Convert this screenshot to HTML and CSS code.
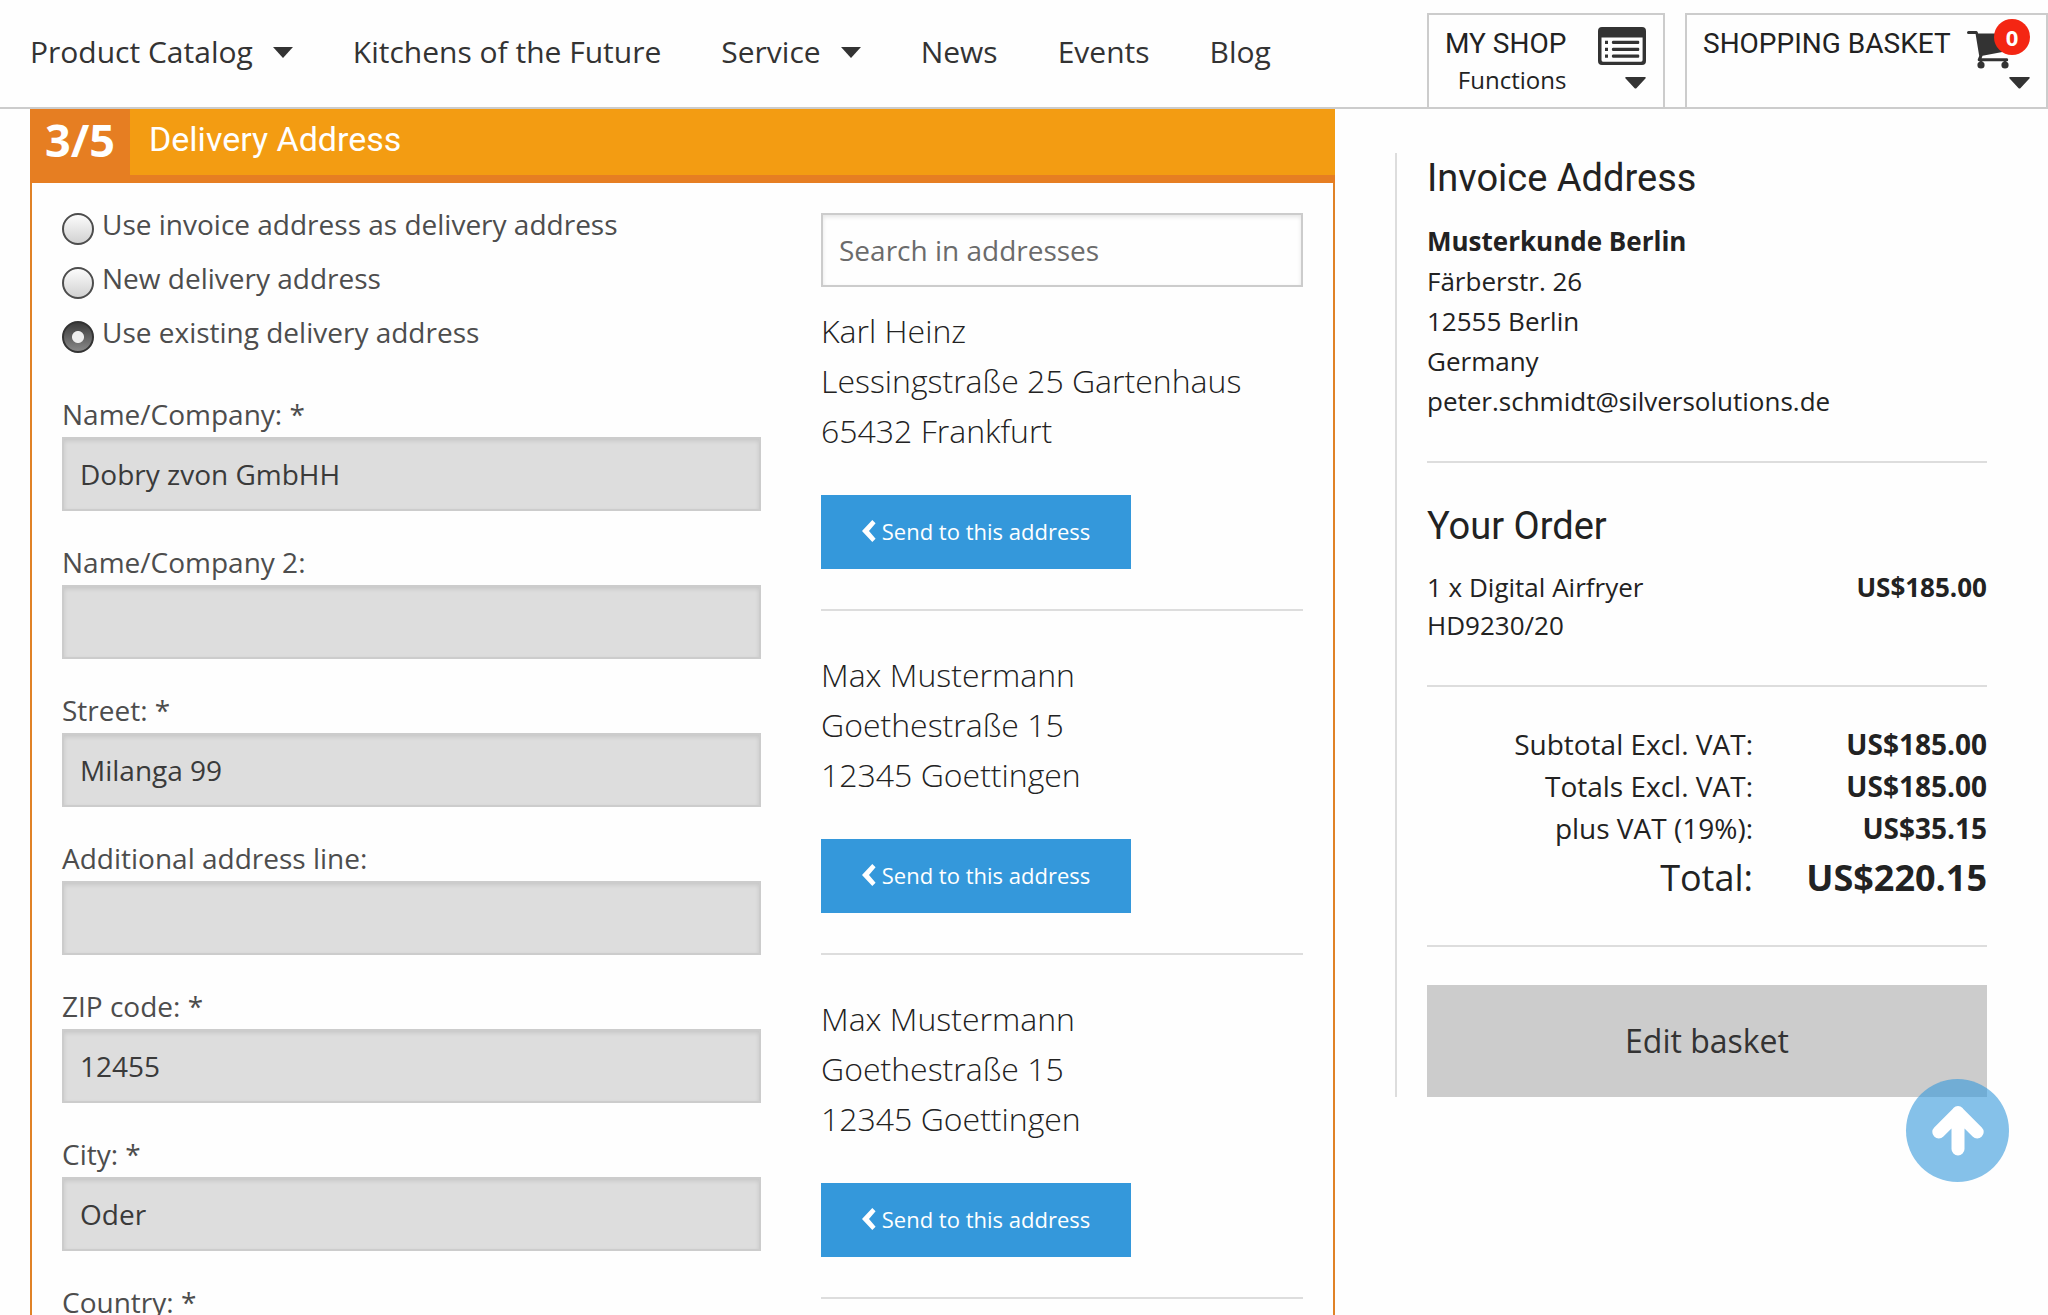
FILE: index.html
```html
<!DOCTYPE html>
<html lang="en">
<head>
<meta charset="utf-8">
<title>Checkout – Delivery Address</title>
<link rel="stylesheet" href="styles.css">
</head>
<body>
<svg class="defs" aria-hidden="true">
  <symbol id="chevron" viewBox="0 0 14 22"><path d="M10.300 0 L13.600 3.300 L7 11 L13.600 18.700 L10.300 22 L0 11 Z"/></symbol>
  <symbol id="caret" viewBox="0 0 21 12"><path d="M1 0 H20 Q21.3 0.3 20.4 1.6 L11.6 11 Q10.5 12.2 9.4 11 L0.6 1.6 Q-0.3 0.3 1 0 Z"/></symbol>
</svg>
<header class="topbar">
  <nav class="nav">
    <a class="nav-item">Product Catalog<i class="arrow"></i></a>
    <a class="nav-item">Kitchens of the Future</a>
    <a class="nav-item">Service<i class="arrow"></i></a>
    <a class="nav-item">News</a>
    <a class="nav-item">Events</a>
    <a class="nav-item">Blog</a>
  </nav>
  <div class="tabs">
    <div class="tab tab-shop">
      <div class="tab-text"><span class="tab-title">MY SHOP</span><span class="tab-sub">Functions</span></div>
      <div class="tab-icons">
        <svg class="icon-list" viewBox="0 0 48 38">
          <path fill-rule="evenodd" d="M4 0 H44 Q48 0 48 4 V34 Q48 38 44 38 H4 Q0 38 0 34 V4 Q0 0 4 0 Z M3.5 10.5 V33 Q3.5 34.7 5 34.7 H43 Q44.6 34.7 44.6 33 V10.5 Z"/>
          <path d="M7 13.7h3v3.2H7z M7 20.7h3v3.2H7z M7 27.5h3v3.2H7z"/>
          <path d="M15 13.7h25.500q.8 0 .8 1.600t-.8 1.600H15q-1.200 0-1.200-1.600t1.200-1.600z M15 20.700h25.500q.8 0 .8 1.600t-.8 1.600H15q-1.200 0-1.200-1.600t1.200-1.600z M15 27.500h25.500q.8 0 .8 1.600t-.8 1.600H15q-1.200 0-1.200-1.600t1.200-1.600z"/>
        </svg>
        <svg class="icon-caret"><use href="#caret"/></svg>
      </div>
    </div>
    <div class="tab tab-basket">
      <div class="tab-text"><span class="tab-title">SHOPPING BASKET</span></div>
      <div class="tab-icons tab-icons-cart">
        <svg class="icon-cart" viewBox="0 0 63 38">
          <path d="M1.500 0 H9.500 Q10.800 0 11.200 2.600 H51 L46 19 L15.500 24.700 L14.600 27.300 H40 Q41.200 27.300 41.200 28.800 T40 30.300 H12 Q10.500 30.300 10.700 28.500 L12.200 25 L8.600 3 H1.500 Q0 3 0 1.500 T1.500 0 Z"/>
          <circle cx="14" cy="34" r="3.600"/><circle cx="38" cy="34" r="3.600"/>
          <path d="M12.700 29h2.600v4h-2.600z M36.700 29h2.600v4h-2.600z"/>
        </svg>
        <svg class="icon-caret"><use href="#caret"/></svg>
        <span class="badge">0</span>
      </div>
    </div>
  </div>
</header>

<main class="page">
  <section class="panel">
    <div class="panel-head"><span class="step">3/5</span><h2 class="panel-title">Delivery Address</h2></div>
    <div class="panel-body">
      <form class="form">
        <label class="radio"><i class="dot"></i>Use invoice address as delivery address</label>
        <label class="radio"><i class="dot"></i>New delivery address</label>
        <label class="radio"><i class="dot dot-on"></i>Use existing delivery address</label>
        <div class="fields">
          <label class="field">Name/Company: *<input class="input" value="Dobry zvon GmbHH"></label>
          <label class="field">Name/Company 2:<input class="input"></label>
          <label class="field">Street: *<input class="input" value="Milanga 99"></label>
          <label class="field">Additional address line:<input class="input"></label>
          <label class="field">ZIP code: *<input class="input" value="12455"></label>
          <label class="field">City: *<input class="input" value="Oder"></label>
          <label class="field">Country: *</label>
        </div>
      </form>
      <div class="addresses">
        <input class="input search" placeholder="Search in addresses">
        <article class="address">
          <p class="lines">Karl Heinz<br>Lessingstraße 25 Gartenhaus<br>65432 Frankfurt</p>
          <a class="send"><svg class="chev"><use href="#chevron"/></svg>Send to this address</a>
        </article>
        <article class="address">
          <p class="lines">Max Mustermann<br>Goethestraße 15<br>12345 Goettingen</p>
          <a class="send"><svg class="chev"><use href="#chevron"/></svg>Send to this address</a>
        </article>
        <article class="address">
          <p class="lines">Max Mustermann<br>Goethestraße 15<br>12345 Goettingen</p>
          <a class="send"><svg class="chev"><use href="#chevron"/></svg>Send to this address</a>
        </article>
      </div>
    </div>
  </section>

  <aside class="summary">
    <section class="invoice">
      <h3 class="heading">Invoice Address</h3>
      <p class="invoice-lines"><b>Musterkunde Berlin</b><br>Färberstr. 26<br>12555 Berlin<br>Germany<br>peter.schmidt@silversolutions.de</p>
    </section>
    <section class="order">
      <h3 class="heading">Your Order</h3>
      <div class="order-row"><span>1 x Digital Airfryer<br>HD9230/20</span><b>US$185.00</b></div>
    </section>
    <section class="totals">
      <div class="total-row"><span>Subtotal Excl. VAT:</span><b>US$185.00</b></div>
      <div class="total-row"><span>Totals Excl. VAT:</span><b>US$185.00</b></div>
      <div class="total-row"><span>plus VAT (19%):</span><b>US$35.15</b></div>
      <div class="total-row total-final"><span>Total:</span><b>US$220.15</b></div>
    </section>
    <a class="edit">Edit basket</a>
  </aside>
</main>

<a class="to-top">
  <svg class="to-top-icon" viewBox="0 0 52 50"><path d="M26 6.500 V43 M6.800 26 L26 6.800 L45.200 26"/></svg>
</a>
</body>
</html>
```
FILE: styles.css
```css
* { box-sizing: border-box; }

html, body {
  margin: 0;
  width: 2048px;
  height: 1315px;
  overflow: hidden;
}

body {
  position: relative;
  background: #fefefe;
  color: #222;
  font-family: "Open Sans", "Noto Sans", sans-serif;
}

h2, h3, p { margin: 0; font-weight: 400; }

.defs { display: none; }

/* Top bar */
.topbar {
  display: flex;
  justify-content: space-between;
  height: 109px;
  padding-left: 30px;
  border-bottom: 2px solid #ccc;
}

.nav { display: flex; gap: 60px; }

.nav-item {
  display: flex;
  align-items: center;
  height: 102px;
  font-size: 30px;
  color: #333;
  white-space: nowrap;
}

.arrow {
  margin-top: 2px;
  margin-left: 20px;
  border: 10px solid transparent;
  border-top: 11px solid #333;
  border-bottom: 0;
}

.tabs { display: flex; gap: 20px; padding-top: 13px; }

.tab {
  display: flex;
  justify-content: space-between;
  border: 2px solid #ccc;
  border-bottom: 0;
  padding: 0 17px 0 16px;
}

.tab-shop { width: 238px; }
.tab-basket { width: 363px; padding-right: 16px; }

.tab-text {
  display: flex;
  flex-direction: column;
  align-items: flex-end;
  white-space: nowrap;
}

.tab-title {
  margin-top: 13px;
  font: 28px/32px Roboto, sans-serif;
}

.tab-sub { margin-top: 3px; font-size: 24px; line-height: 33px; }

.tab-icons {
  display: flex;
  flex-direction: column;
  align-items: flex-end;
  gap: 12px;
  padding-top: 12px;
  fill: #333;
}

.tab-icons-cart { position: relative; padding-top: 16px; gap: 8px; }
.icon-list { width: 48px; height: 38px; }
.icon-cart { width: 63px; height: 38px; }
.icon-caret { width: 21px; height: 12px; }

.badge {
  position: absolute;
  top: 4px;
  right: 0;
  width: 36px;
  height: 36px;
  border-radius: 50%;
  background: #f42613;
  color: #fff;
  font-size: 22px;
  font-weight: 700;
  line-height: 36px;
  text-align: center;
}

/* Page */
.page {
  display: flex;
  align-items: flex-start;
  gap: 60px;
  padding-left: 30px;
}

.panel {
  width: 1305px;
  height: 1206px;
  border: 2px solid #e08227;
  border-top: 0;
  border-bottom: 0;
}

.panel-head {
  display: flex;
  height: 74px;
  margin: 0 -2px;
  background: #f39c12;
  border-bottom: 8px solid #e67e22;
  color: #fff;
}

.step {
  width: 100px;
  background: #e67e22;
  font-size: 45px;
  font-weight: 700;
  line-height: 62px;
  text-align: center;
}

.panel-title {
  padding-left: 19px;
  font: 34px/61px Roboto, sans-serif;
}

.panel-body {
  display: grid;
  grid-template-columns: 699px 482px;
  column-gap: 60px;
  height: 1132px;
  padding: 30px 30px 0;
  overflow: hidden;
}

.radio {
  display: flex;
  gap: 8px;
  height: 54px;
  font-size: 28px;
  line-height: 22px;
  color: #4d4d4d;
}

.dot {
  width: 32px;
  height: 32px;
  border: 2px solid #4d4d4d;
  border-radius: 50%;
  background: linear-gradient(#fcfcfc, #d2d2d2);
}

.dot-on {
  border-color: #333;
  background:
    radial-gradient(circle at 50% 50%, #eee 5.500px, transparent 6.500px),
    linear-gradient(#3c3c3c, #888);
}

.fields { padding-top: 18px; }

.field {
  display: block;
  height: 148px;
  font-size: 28px;
  line-height: 42px;
  color: #4d4d4d;
}

.input {
  display: block;
  width: 100%;
  height: 74px;
  padding: 0 16px 1px;
  border: 2px solid #ccc;
  border-radius: 0;
  background: #ddd;
  box-shadow: inset 0 2px 4px rgba(0, 0, 0, .1);
  color: #3a3a3a;
  font: 28px "Open Sans", "Noto Sans", sans-serif;
}

.field .input { margin-top: 2px; }

.search { background: #fefefe; }
.search::placeholder { color: #6b6b6b; opacity: 1; }

.address {
  height: 344px;
  border-bottom: 2px solid #ddd;
}

.lines {
  padding-top: 39px;
  font-size: 32px;
  font-weight: 300;
  line-height: 50px;
}

.search + .address { height: 324px; }
.search + .address .lines { padding-top: 19px; }

.send {
  display: flex;
  align-items: center;
  justify-content: center;
  gap: 6px;
  width: 310px;
  height: 74px;
  margin-top: 39px;
  padding-bottom: 2px;
  background: #3498db;
  color: #fff;
  font-size: 22px;
}

.chev { width: 14px; height: 22px; fill: #fff; }

/* Order summary */
.summary {
  width: 592px;
  height: 944px;
  margin-top: 44px;
  padding-left: 30px;
  border-left: 2px solid #ddd;
}

.heading { font: 38px/51px Roboto, sans-serif; }

.invoice { height: 310px; border-bottom: 2px solid #ddd; }
.invoice-lines { margin-top: 17px; font-size: 26px; line-height: 40px; }

.order { height: 224px; padding-top: 38px; border-bottom: 2px solid #ddd; }

.order-row {
  display: flex;
  justify-content: space-between;
  margin-top: 16px;
  font-size: 26px;
  line-height: 38px;
}

.totals { height: 260px; padding-top: 36px; border-bottom: 2px solid #ddd; }

.total-row {
  display: grid;
  grid-template-columns: 326px 1fr;
  font-size: 28px;
  line-height: 42px;
  text-align: right;
}

.total-final { font-size: 36px; line-height: 58px; }

.edit {
  display: block;
  height: 112px;
  margin-top: 38px;
  background: #ccc;
  color: #333;
  font-size: 32px;
  line-height: 112px;
  text-align: center;
}

/* Floating scroll button, above the page */
.to-top {
  position: absolute;
  left: 1906px;
  top: 1079px;
  display: flex;
  align-items: center;
  justify-content: center;
  width: 103px;
  height: 103px;
  border-radius: 50%;
  background: rgba(52, 152, 219, .6);
}

.to-top-icon {
  width: 52px;
  height: 50px;
  fill: none;
  stroke: #fff;
  stroke-width: 13px;
  stroke-linecap: round;
  stroke-linejoin: round;
}
```
